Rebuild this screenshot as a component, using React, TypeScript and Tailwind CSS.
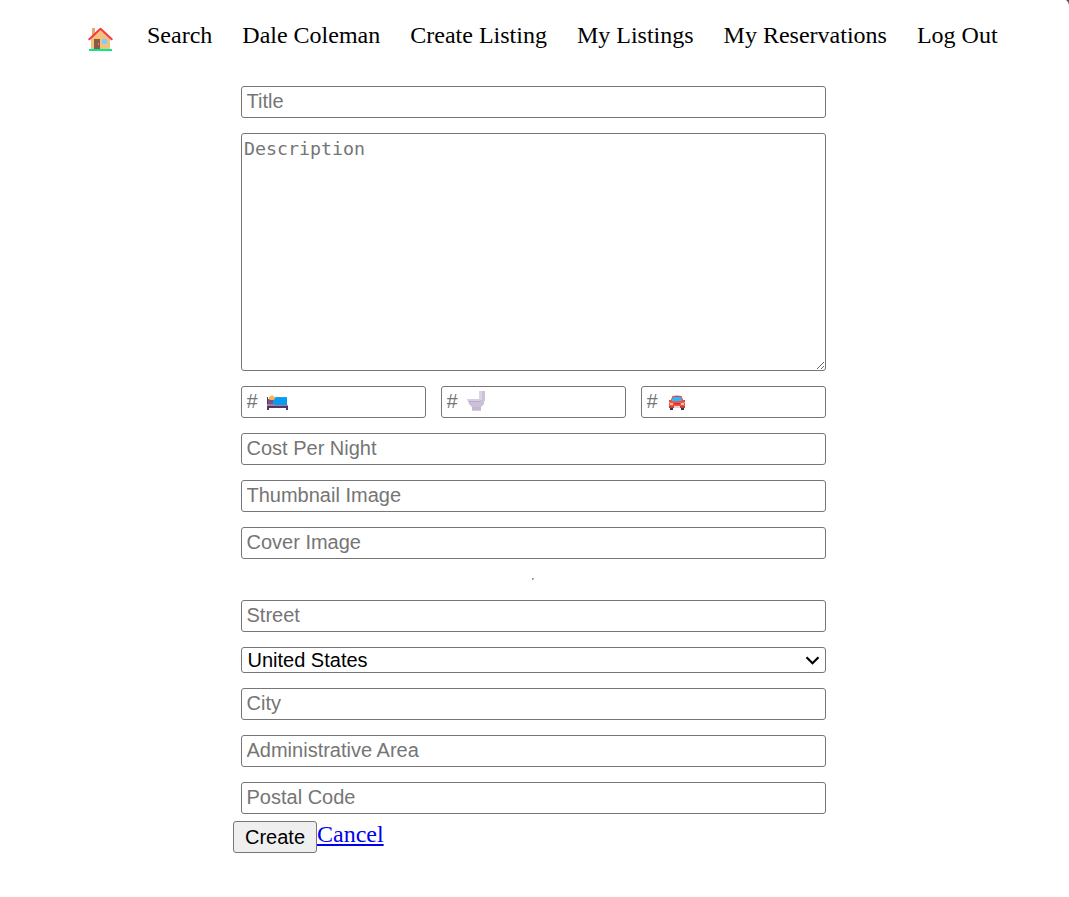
import React from "react";

const field =
  "block h-8 w-full rounded-[3px] border border-[#767676] bg-white pl-[4.5px] pr-[5px] pt-0 pb-[1px] font-['Liberation_Sans',Arial,sans-serif] text-[20px] leading-[23px] text-black placeholder:text-[#757575] outline-none";

function House() {
  return (
    <svg className="ml-[1px] block h-[24px] w-[25px]" viewBox="0 0 25 24" shapeRendering="geometricPrecision" aria-label="Home">
      <path d="M4 1h3v7H4z" fill="#e2ab70" />
      <path d="M3 11.5 12.5 3 22 11.5V22H3z" fill="#f3c27d" />
      <path d="M1.3 12.2 12.5 1.7l11.2 10.5" fill="none" stroke="#f8383d" strokeWidth="2" strokeLinecap="round" strokeLinejoin="round" />
      <path d="M6 12h6v10H6z" fill="#8f5745" />
      <path d="M10 16h1v2h-1z" fill="#c58a65" />
      <path d="M14 12h5v5h-5z" fill="#83cbff" />
      <path d="M1 22h23v2H1z" fill="#00ed8e" />
    </svg>
  );
}

function Bed() {
  return (
    <svg className="absolute left-[26px] top-[9px] h-[15px] w-[21px]" viewBox="0 0 21 15">
      <path d="M0 2h1v13H0z" fill="#55385f" />
      <path d="M1 4h5v6H1z" fill="#775486" />
      <path d="M6 3q0-1 1-1h12q1 0 1 1v7H6z" fill="#0999ed" />
      <path d="M7 2h12q1 0 1 1H6z" fill="#1aa9ed" />
      <path d="M0 9h7l1 1h13v2H0z" fill="#9b80ad" />
      <path d="M0 11h21v4h-2v-2H2v2H0z" fill="#533660" />
      <path d="m2 2 2-1 1-1 1 1 2 1v2L6 5H3L2 4z" fill="#ffb34c" />
    </svg>
  );
}

function Toilet() {
  return (
    <svg className="absolute left-[26px] top-[5px] h-5 w-[19px]" viewBox="0 0 19 20">
      <path d="M13 0h5v10h-5z" fill="#cdc3d9" />
      <path d="M12 0h3v9h-3z" fill="#dcd4e4" />
      <path d="M1 9h16v4l-3 3v3.5H5V16l-3-3z" fill="#cbc0d7" />
      <path d="M0 8h13v2H1Q0 10 0 8z" fill="#d7cee1" />
      <path d="M1 10h13l-1 1H2z" fill="#b8aac8" />
      <path d="M5 16h9v3.5H5z" fill="#c5b8d1" />
    </svg>
  );
}

function Car() {
  return (
    <svg className="absolute left-[27px] top-[9px] h-[15px] w-[18px]" viewBox="0 0 18 15">
      <path d="M2 11h3v4H2zm11 0h3v4h-3z" fill="#3e3142" />
      <path d="m4.5 1-2 5h13l-2-5Q9 0 4.5 1z" fill="#f33e43" />
      <path d="M5 2h8l1.5 4h-11z" fill="#24bafd" />
      <path d="M1 5h2v2H1zm14 0h2v2h-2z" fill="#d44a4e" />
      <path d="M3 6h12l2 2v5H1V8z" fill="#f65047" />
      <path d="M1 11h16v2H1z" fill="#c53f49" />
      <path d="M2 8h3v2H2zm11 0h3v2h-3z" fill="#ffc36c" />
      <path d="M6 8h6v1.5H6z" fill="#b63c42" />
      <path d="M6 11h6v2H6z" fill="#e3d3df" />
    </svg>
  );
}

export default function App() {
  return (
    <div className="relative h-[897px] w-[1069px] overflow-hidden bg-white font-['Liberation_Serif','Times_New_Roman',serif] text-[24px] leading-[27px] text-black">
      <svg className="absolute right-0 top-0 h-[6px] w-[3px]" viewBox="0 0 3 6">
        <path d="M0 0h3v6Q3 2 0 0z" fill="#555" />
      </svg>
      <nav className="flex h-[86px] gap-[30px] whitespace-nowrap pl-[87px] pt-[22px]">
        <a className="w-[30px] pt-[5px]"><House /></a>
        <a>Search</a>
        <a>Dale Coleman</a>
        <a>Create Listing</a>
        <a>My Listings</a>
        <a>My Reservations</a>
        <a>Log Out</a>
      </nav>
      <form className="ml-[233px] w-[601px]">
        <div className="flex flex-col gap-[15px] px-2">
          <input className={field} placeholder="Title" />
          <textarea
            className="block h-[238px] w-full resize rounded-[3px] border border-[#767676] bg-white px-[2px] py-[3px] font-['DejaVu_Sans_Mono',monospace] text-[18.27px] leading-[23px] outline-none placeholder:text-[#757575]"
            placeholder="Description"
          />
          <div className="grid grid-cols-3 gap-[15px]">
            <div className="relative"><input className={field} placeholder="#" /><Bed /></div>
            <div className="relative"><input className={field} placeholder="#" /><Toilet /></div>
            <div className="relative"><input className={field} placeholder="#" /><Car /></div>
          </div>
          <input className={field} placeholder="Cost Per Night" />
          <input className={field} placeholder="Thumbnail Image" />
          <input className={field} placeholder="Cover Image" />
        </div>
        <div className="flex h-[41px] justify-center pt-[19px]">
          <div className="mr-[2px] h-[2px] w-[2px] border-l border-t border-[#999] bg-[#ddd]" />
        </div>
        <div className="flex flex-col gap-[15px] px-2">
          <input className={field} placeholder="Street" />
          <div className="relative">
            <select className="block h-[26px] w-full appearance-none rounded-[3px] border border-[#767676] bg-white pl-[5.5px] pt-[1px] font-['Liberation_Sans',Arial,sans-serif] text-[20px] leading-[23px] text-black outline-none">
              <option>United States</option>
            </select>
            <svg className="pointer-events-none absolute right-[6px] top-[9px] h-[9px] w-[15px]" viewBox="0 0 15 9">
              <path d="m1.5 1.3 6 6 6-6" fill="none" stroke="#000" strokeWidth="2.2" />
            </svg>
          </div>
          <input className={field} placeholder="City" />
          <input className={field} placeholder="Administrative Area" />
          <input className={field} placeholder="Postal Code" />
        </div>
        <div className="flex pt-[7px]">
          <button type="button" className="h-8 w-[84px] rounded-[3px] border border-[#767676] bg-[#efefef] font-['Liberation_Sans',Arial,sans-serif] text-[20px] leading-[23px]">
            Create
          </button>
          <a className="text-[#0000ee] underline">Cancel</a>
        </div>
      </form>
    </div>
  );
}
